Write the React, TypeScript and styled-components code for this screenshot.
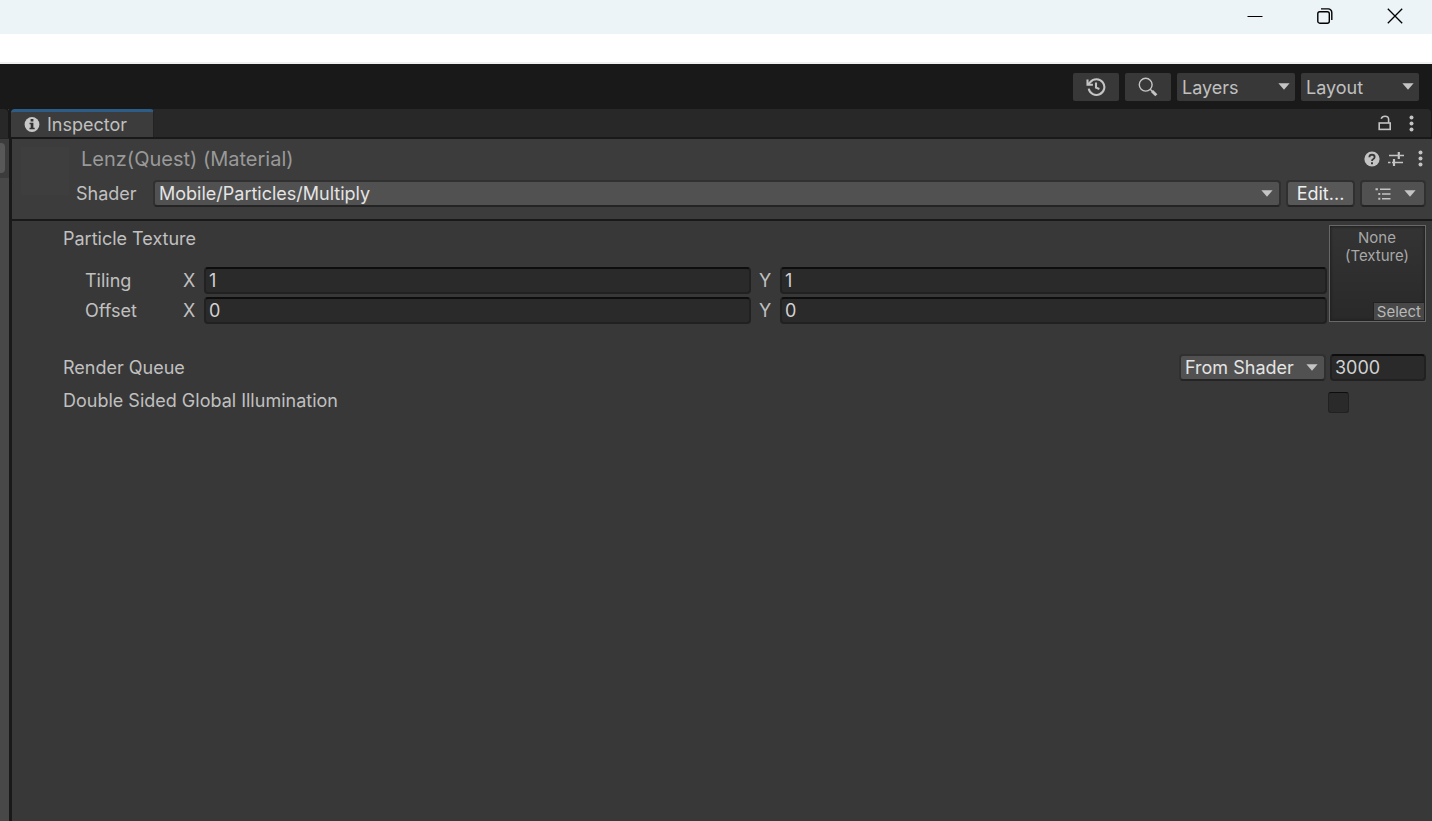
import React from "react";
import styled, { createGlobalStyle } from "styled-components";

const GlobalStyle = createGlobalStyle`
  *, *::before, *::after { box-sizing: border-box; }
  body {
    margin: 0;
    background: #191919;
    color: #c0c0c0;
    font-family: Inter, "Liberation Sans", sans-serif;
    font-size: 18px;
    line-height: 24px;
    font-optical-sizing: none;
  }
  button, input, select { margin: 0; font: inherit; color: inherit; }
  svg { display: block; flex: none; }
`;

const Page = styled.div`
  display: flex;
  flex-direction: column;
  min-height: 100vh;
`;

const TitleBar = styled.header`
  display: flex;
  justify-content: flex-end;
  height: 34px;
  padding: 0 2px 2px 0;
  background: #ecf4f8;
`;

const WindowButton = styled.button`
  display: flex;
  align-items: center;
  justify-content: center;
  width: 70px;
  padding: 0;
  border: 0;
  background: none;
  color: #000;
`;

const MenuStrip = styled.div`
  height: 30px;
  background: #fff;
  border-bottom: 2px solid #f0f0f0;
`;

const Toolbar = styled.div`
  display: flex;
  justify-content: flex-end;
  align-items: center;
  gap: 6px;
  height: 45px;
  padding-right: 13px;
`;

const ToolButton = styled.button`
  display: flex;
  align-items: center;
  justify-content: center;
  width: 46px;
  height: 28px;
  padding: 0;
  border: 0;
  border-radius: 2px;
  background: #383838;
`;

const SelectBox = styled.div<{ $kind: "tool" | "field" }>`
  position: relative;
  display: flex;
  align-items: center;
  height: ${(p) => (p.$kind === "tool" ? 28 : 27)}px;
  border-radius: ${(p) => (p.$kind === "tool" ? 2 : 4)}px;
  background: ${(p) => (p.$kind === "tool" ? "#383838" : "#515151")};
  border: ${(p) => (p.$kind === "tool" ? "0" : "2px solid #303030")};
  border-bottom-color: #242424;
  color: ${(p) => (p.$kind === "tool" ? "#c0c0c0" : "#e4e4e4")};

  select {
    appearance: none;
    width: 100%;
    height: 100%;
    padding: ${(p) => (p.$kind === "tool" ? "2px 24px 0 5px" : "0 24px 0 4px")};
    border: 0;
    background: none;
  }

  svg {
    position: absolute;
    right: ${(p) => (p.$kind === "tool" ? 5 : 6)}px;
    pointer-events: none;
  }
`;

const ToolSelect = styled(SelectBox)`
  width: 118px;
`;

const ShaderSelect = styled(SelectBox)`
  flex: 1;
`;

const QueueSelect = styled(SelectBox)`
  width: 147px;
`;

const Dock = styled.div`
  flex: 1;
  display: flex;
  gap: 2px;
`;

const Neighbour = styled.div`
  display: flex;
  flex-direction: column;
  width: 9px;
  background: #484848;
`;

const NeighbourTab = styled.div`
  height: 29px;
  margin-right: 1px;
  border-top-right-radius: 4px;
  background: #282828;
  box-shadow: 1px 0 0 #191919, 1px -1px 0 #191919;
`;

const NeighbourBar = styled.div`
  height: 40px;
  padding-top: 4px;
  background: #3c3c3c;
  border-top: 1px solid #232323;
`;

const NeighbourButton = styled.div`
  width: 5px;
  height: 30px;
  border-radius: 0 4px 4px 0;
  background: #585858;
`;

const Inspector = styled.section`
  flex: 1;
  display: flex;
  flex-direction: column;
`;

const TabRow = styled.div`
  display: flex;
  justify-content: space-between;
  height: 30px;
  margin-right: 1px;
  border-bottom: 2px solid #191919;
  border-radius: 4px 4px 0 0;
  background: #282828;
`;

const Tab = styled.div`
  display: flex;
  align-items: center;
  gap: 7px;
  width: 143px;
  padding-left: 13px;
  border-top: 3px solid #2c5d87;
  border-right: 1px solid #232323;
  border-radius: 4px 4px 0 0;
  background: #3c3c3c;
`;

const IconGroup = styled.div<{ $gap: number }>`
  display: flex;
  align-items: center;
  gap: ${(p) => p.$gap}px;
`;

const TabActions = styled(IconGroup)`
  padding-right: 17px;
`;

const IconButton = styled.button`
  display: flex;
  justify-content: center;
  padding: 0;
  border: 0;
  background: none;
`;

const HeaderIconButton = styled(IconButton)`
  width: 16px;
`;

const Panel = styled.div`
  flex: 1;
  margin-left: 1px;
  background: #383838;
`;

const MaterialHeader = styled.div`
  display: grid;
  grid-template-columns: 48px 1fr;
  gap: 7px;
  height: 82px;
  padding: 8px 4px 0 9px;
  border-bottom: 2px solid #191919;
  background: #3c3c3c;
`;

const Preview = styled.div`
  height: 48px;
  background: #3e3e3e;
`;

const HeaderRows = styled.div`
  display: flex;
  flex-direction: column;
  gap: 10px;
`;

const TitleRow = styled.div`
  display: flex;
  justify-content: space-between;
  align-items: center;
  height: 23px;
  padding-left: 5px;
`;

const MaterialName = styled.h1`
  margin: 0;
  font-size: 20px;
  font-weight: 400;
  line-height: 24px;
  color: #999;
`;

const ShaderRow = styled.div`
  display: flex;
  align-items: center;
  gap: 5px;
  padding-right: 2px;
`;

const ShaderLabel = styled.label`
  width: 72px;
`;

const FieldButton = styled.button<{ $width: number }>`
  display: flex;
  align-items: center;
  justify-content: center;
  width: ${(p) => p.$width}px;
  height: 27px;
  padding: 0;
  border: 2px solid #303030;
  border-bottom-color: #242424;
  border-radius: 4px;
  background: #585858;
  color: #eee;
`;

const PresetButton = styled(FieldButton)`
  gap: 13px;
  padding-left: 5px;
  background: #515151;
`;

const Properties = styled.div`
  padding: 4px 6px 0 51px;
`;

const TextureProperty = styled.div`
  display: flex;
  gap: 2px;
  margin-bottom: 30px;
`;

const TextureFields = styled.div`
  flex: 1;
  display: flex;
  flex-direction: column;
  gap: 3px;
`;

const TextureLabel = styled.div`
  height: 39px;
  line-height: 28px;
`;

const VectorRow = styled.div`
  display: grid;
  grid-template-columns: 98px 21px 1fr 29px 1fr;
  align-items: center;
  padding-left: 22px;

  label:nth-of-type(2) {
    padding-left: 8px;
  }
`;

const Field = styled.input`
  width: 100%;
  height: 27px;
  padding: 0 3px;
  border: 2px solid #212121;
  border-top-color: #0d0d0d;
  border-radius: 4px;
  background: #2a2a2a;
  color: #d2d2d2;
`;

const QueueField = styled(Field)`
  width: 96px;
`;

const TextureSlot = styled.div`
  display: flex;
  flex-direction: column;
  justify-content: space-between;
  width: 97px;
  height: 97px;
  padding: 3px 1px 1px 0;
  border: 1px solid #686868;
  background: linear-gradient(#343434, #292929);
  box-shadow: inset 0 0 3px 1px #202020;
  font-size: 15px;
  line-height: 18px;
  text-align: center;
  color: #a8a8a8;
`;

const SelectTexture = styled.button`
  align-self: flex-end;
  height: 18px;
  padding: 0 3px;
  border: 0;
  border-left: 1px solid #222;
  border-top: 1px solid #222;
  background: #484848;
  color: #b8b8b8;
  line-height: 16px;
`;

const PropertyRow = styled.div<{ $height: number }>`
  display: flex;
  align-items: center;
  gap: 4px;
  height: ${(p) => p.$height}px;

  label {
    flex: 1;
  }
`;

const Toggle = styled.input`
  appearance: none;
  width: 21px;
  height: 21px;
  margin: 3px 77px 0 0;
  border: 1px solid #212121;
  border-top-color: #0d0d0d;
  border-radius: 3px;
  background: #2a2a2a;

  &:checked {
    background: #777;
  }
`;

const Arrow = () => (
  <svg width="12" height="7" viewBox="0 0 12 7" fill="#c4c4c4">
    <path d="M0.4 0.3h11.2L6 6.8z" />
  </svg>
);

const Dots = () => (
  <svg width="5" height="17" viewBox="0 0 5 17" fill="#c4c4c4">
    <circle cx="2.5" cy="2.5" r="2" />
    <circle cx="2.5" cy="8.5" r="2" />
    <circle cx="2.5" cy="14.5" r="2" />
  </svg>
);

const Vector = ({ name, value }: { name: string; value: string }) => (
  <VectorRow>
    <span>{name}</span>
    <label htmlFor={`${name}-x`}>X</label>
    <Field id={`${name}-x`} defaultValue={value} />
    <label htmlFor={`${name}-y`}>Y</label>
    <Field id={`${name}-y`} defaultValue={value} />
  </VectorRow>
);

export default function App() {
  return (
    <Page>
      <GlobalStyle />
      <TitleBar>
        <WindowButton aria-label="Minimize">
          <svg width="16" height="16" viewBox="0 0 16 16" stroke="currentColor">
            <path d="M0.5 8.5h15" />
          </svg>
        </WindowButton>
        <WindowButton aria-label="Restore">
          <svg width="16" height="16" viewBox="0 0 16 16" fill="none" stroke="currentColor" strokeWidth="1.4">
            <rect x="0.8" y="3.7" width="11.5" height="11.5" rx="2" />
            <path d="M4 0.9h7.3a3.5 3.5 0 0 1 3.5 3.5V12" />
          </svg>
        </WindowButton>
        <WindowButton aria-label="Close">
          <svg width="16" height="16" viewBox="0 0 16 16" fill="none" stroke="currentColor" strokeWidth="1.3">
            <path d="M0.8 0.8l14.4 14.4M15.2 0.8L0.8 15.2" />
          </svg>
        </WindowButton>
      </TitleBar>
      <MenuStrip />
      <Toolbar>
        <ToolButton aria-label="Undo history">
          <svg width="20" height="20" viewBox="0 0 20 20" fill="none" stroke="#c4c4c4" strokeWidth="2.1">
            <path d="M2.7 11.6A7.9 7.9 0 1 0 4.4 5L2 7.4" />
            <path d="M1.5 2.6v5.2h5.4" />
            <path d="M10 5.6v5l3.4 1.4" />
          </svg>
        </ToolButton>
        <ToolButton aria-label="Search">
          <svg width="20" height="20" viewBox="0 0 20 20" fill="none" stroke="#c4c4c4">
            <circle cx="7.7" cy="7.7" r="6.4" strokeWidth="1.4" />
            <path d="M12.2 12.2l2 2" strokeWidth="1.5" />
            <path d="M14 14l4.3 4.3" strokeWidth="3" />
          </svg>
        </ToolButton>
        <ToolSelect $kind="tool">
          <select aria-label="Layers">
            <option>Layers</option>
          </select>
          <Arrow />
        </ToolSelect>
        <ToolSelect $kind="tool">
          <select aria-label="Layout">
            <option>Layout</option>
          </select>
          <Arrow />
        </ToolSelect>
      </Toolbar>
      <Dock>
        <Neighbour>
          <NeighbourTab />
          <NeighbourBar>
            <NeighbourButton />
          </NeighbourBar>
        </Neighbour>
        <Inspector>
          <TabRow>
            <Tab>
              <svg width="16" height="16" viewBox="0 0 16 16">
                <circle cx="8" cy="7.5" r="7.4" fill="#c8c8c8" />
                <path d="M6.6 2.1h2.8v2.3H6.6zM5.5 5.7h3.9v5.1h1.3v1.5H5.5v-1.5h1.2V7.2H5.5z" fill="#333" />
              </svg>
              Inspector
            </Tab>
            <TabActions $gap={17}>
              <IconButton aria-label="Lock">
                <svg width="14" height="16" viewBox="0 0 14 16" fill="none" stroke="#c4c4c4" strokeWidth="1.6">
                  <rect x="1.2" y="8" width="11" height="6.4" />
                  <path d="M10.6 8V4.3Q10.6 1.2 7 1.2Q4 1.2 3.2 3.8" />
                </svg>
              </IconButton>
              <IconButton aria-label="Tab menu">
                <Dots />
              </IconButton>
            </TabActions>
          </TabRow>
          <Panel>
            <MaterialHeader>
              <Preview />
              <HeaderRows>
                <TitleRow>
                  <MaterialName>Lenz(Quest) (Material)</MaterialName>
                  <IconGroup $gap={8}>
                    <HeaderIconButton aria-label="Help">
                      <svg width="16" height="16" viewBox="0 0 16 16">
                        <circle cx="8" cy="8" r="7.6" fill="#c4c4c4" />
                        <path d="M5.4 6.2Q5.4 3.8 8 3.8T10.6 6Q10.6 7.2 9.3 8Q8 8.7 8 10" fill="none" stroke="#383838" strokeWidth="1.9" />
                        <path d="M7 11.2h2v2H7z" fill="#383838" />
                      </svg>
                    </HeaderIconButton>
                    <HeaderIconButton aria-label="Presets">
                      <svg width="16" height="16" viewBox="0 0 16 16" fill="none" stroke="#c4c4c4">
                        <path d="M1 4.5h9M12 4.5h4M0 11.5h2.5M4 11.5h11" strokeWidth="1.5" />
                        <path d="M10.8 1v7M6 8v7" strokeWidth="2.2" />
                      </svg>
                    </HeaderIconButton>
                    <HeaderIconButton aria-label="Component menu">
                      <Dots />
                    </HeaderIconButton>
                  </IconGroup>
                </TitleRow>
                <ShaderRow>
                  <ShaderLabel htmlFor="shader">Shader</ShaderLabel>
                  <ShaderSelect $kind="field">
                    <select id="shader">
                      <option>Mobile/Particles/Multiply</option>
                    </select>
                    <Arrow />
                  </ShaderSelect>
                  <FieldButton $width={69}>Edit...</FieldButton>
                  <PresetButton $width={66} aria-label="Shader options">
                    <svg width="16" height="12" viewBox="0 0 16 12" fill="none" stroke="#c4c4c4" strokeWidth="1.4">
                      <path d="M5 1.2h10.5M7 6h8.5M7 10.8h8.5" />
                      <path d="M0.5 1.2h2.4M3.3 6h2M3.3 10.8h2" strokeWidth="2" />
                    </svg>
                    <Arrow />
                  </PresetButton>
                </ShaderRow>
              </HeaderRows>
            </MaterialHeader>
            <Properties>
              <TextureProperty>
                <TextureFields>
                  <TextureLabel>Particle Texture</TextureLabel>
                  <Vector name="Tiling" value="1" />
                  <Vector name="Offset" value="0" />
                </TextureFields>
                <TextureSlot>
                  <div>
                    None
                    <br />
                    (Texture)
                  </div>
                  <SelectTexture>Select</SelectTexture>
                </TextureSlot>
              </TextureProperty>
              <PropertyRow $height={27}>
                <label htmlFor="queue">Render Queue</label>
                <QueueSelect $kind="field">
                  <select aria-label="Render queue source">
                    <option>From Shader</option>
                  </select>
                  <Arrow />
                </QueueSelect>
                <QueueField id="queue" defaultValue="3000" />
              </PropertyRow>
              <PropertyRow $height={39}>
                <label htmlFor="double-sided">Double Sided Global Illumination</label>
                <Toggle id="double-sided" type="checkbox" />
              </PropertyRow>
            </Properties>
          </Panel>
        </Inspector>
      </Dock>
    </Page>
  );
}
